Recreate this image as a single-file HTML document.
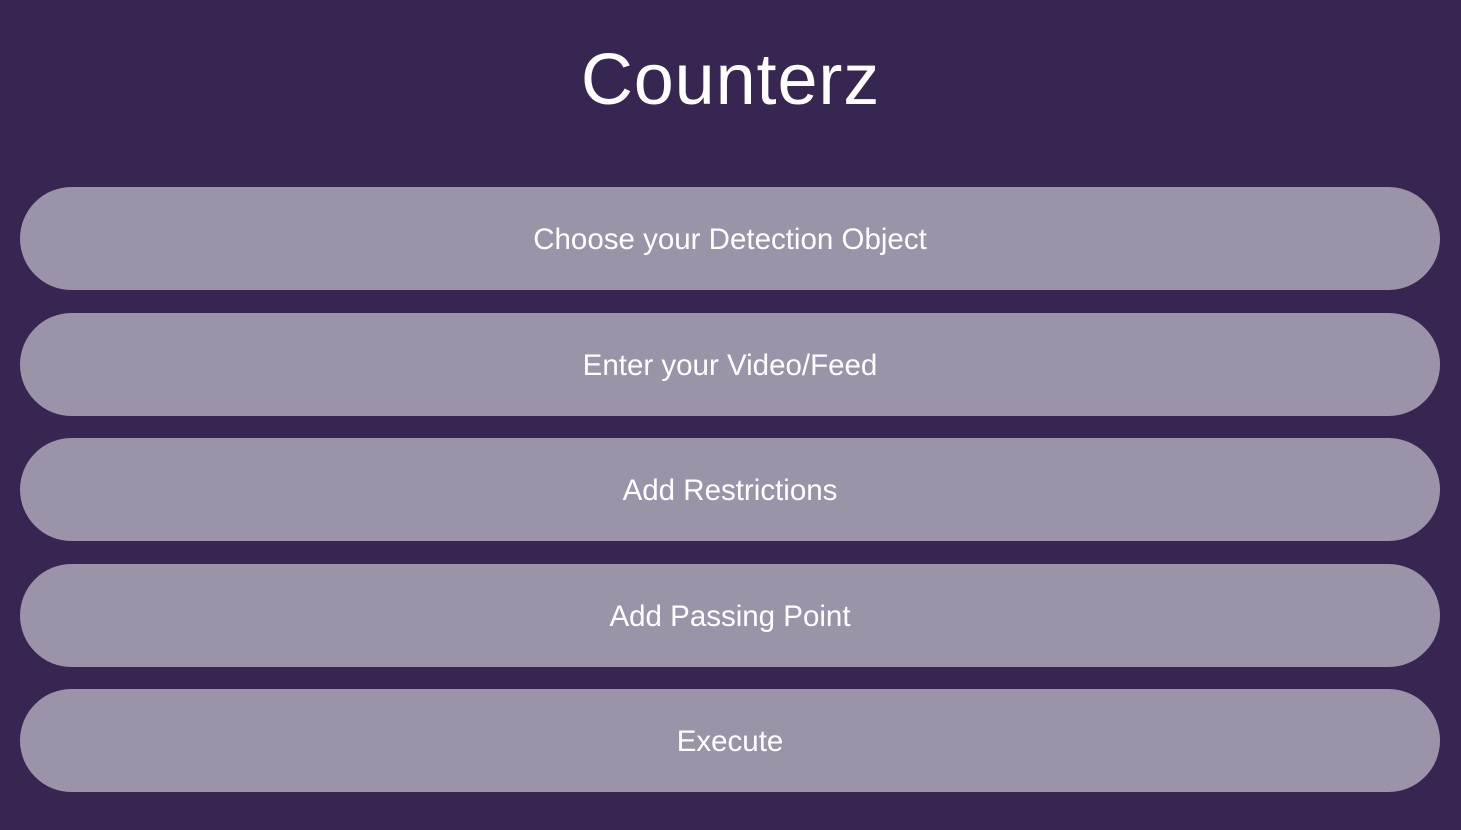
<!DOCTYPE html>
<html><head><meta charset="utf-8"><style>
html,body{margin:0;padding:0;width:1461px;height:830px;background:#372651;overflow:hidden;font-family:"Liberation Sans",sans-serif;}
h1{position:absolute;top:40px;left:0;width:1461px;margin:0;text-align:center;color:#fff;font-weight:400;font-size:72px;line-height:80px;letter-spacing:0.9px}
.b{position:absolute;left:20px;width:1420px;height:103px;border-radius:52px;background:#9b94a8;color:#fff;font-size:29.5px;display:flex;align-items:center;justify-content:center;padding-top:2px;box-sizing:border-box}
</style></head><body>
<h1>Counterz</h1>
<div class="b" style="top:187px">Choose your Detection Object</div>
<div class="b" style="top:313px">Enter your Video/Feed</div>
<div class="b" style="top:438px">Add Restrictions</div>
<div class="b" style="top:564px">Add Passing Point</div>
<div class="b" style="top:689px">Execute</div>
</body></html>
